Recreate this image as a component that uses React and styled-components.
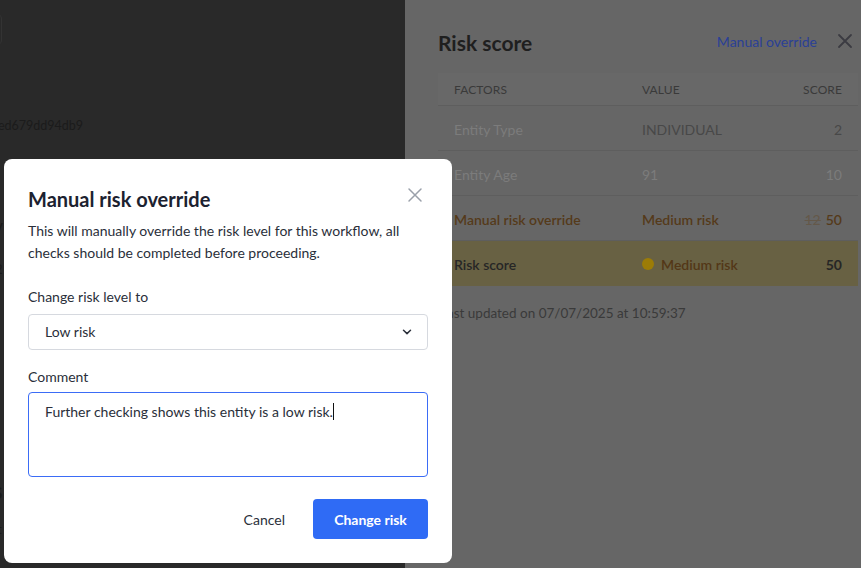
import React from "react";
import styled, { createGlobalStyle } from "styled-components";

const Global = createGlobalStyle`
  html, body { margin: 0; padding: 0; }
  body { overflow: hidden; font-family: "Lato", "Open Sans", sans-serif; }
  * { box-sizing: border-box; }
`;

const Screen = styled.div`
  position: relative;
  width: 861px;
  height: 568px;
  display: flex;
  background: #292929;
  overflow: hidden;
`;

const BackPage = styled.div`
  width: 405px;
  flex: none;
  display: flex;
  flex-direction: column;
  padding-top: 13px;
`;

const BackCard = styled.div`
  width: 40px;
  height: 33px;
  margin-left: -38px;
  border: 1px solid #333;
  border-radius: 6px;
`;

const BackHash = styled.div`
  margin-top: 72px;
  margin-left: -2px;
  font-size: 12.5px;
  color: #1b1b1b;
`;

const BackFrag = styled.div`
  margin-left: ${(p) => p.$x}px;
  margin-top: ${(p) => p.$t}px;
  font-size: ${(p) => p.$s || 13}px;
  font-weight: ${(p) => p.$w || 400};
  color: #1b1b1b;
  line-height: 1;
`;

const Drawer = styled.aside`
  flex: 1;
  background: #666666;
  padding: 30px 3px 0 33px;
  display: flex;
  flex-direction: column;
`;

const DrawerHead = styled.div`
  display: flex;
  align-items: center;
  height: 24px;
  padding-right: 5px;
`;

const DrawerTitle = styled.h2`
  margin: 0;
  flex: 1;
  font-size: 21px;
  font-weight: 700;
  color: #1f1f1f;
`;

const HeadLink = styled.span`
  font-size: 14px;
  color: #2a4096;
  margin-right: 20px;
  margin-top: -2px;
`;

const IconBtn = styled.span`
  display: inline-flex;
  width: 16px;
  height: 16px;
  margin-top: ${(p) => p.$mt}px;
  color: ${(p) => p.$color};
`;

const Table = styled.div`
  margin-top: 19px;
  display: flex;
  flex-direction: column;
`;

const Row = styled.div`
  display: grid;
  grid-template-columns: 188px 1fr auto;
  align-items: center;
  height: ${(p) => (p.$head ? 33 : 45)}px;
  padding: 0 16px;
  border-bottom: 1px solid ${(p) => (p.$last ? "transparent" : "#5e5e5e")};
  background: ${(p) => p.$bg || "transparent"};
  font-size: ${(p) => (p.$head ? 12 : 14)}px;
  padding-top: ${(p) => (p.$head ? 0 : 2)}px;
  ${(p) => p.$head && "text-transform: uppercase; letter-spacing: 0.1px;"}
`;

const Cell = styled.span`
  color: ${(p) => p.$c};
  font-weight: ${(p) => p.$w || 400};
  display: inline-flex;
  align-items: center;
  justify-content: ${(p) => (p.$right ? "flex-end" : "flex-start")};
  gap: 5px;
`;

const Struck = styled.s`
  color: #645849;
  font-weight: 400;
`;

const Dot = styled.span`
  width: 12px;
  height: 12px;
  border-radius: 50%;
  background: #9c7c06;
  margin-right: 2px;
`;

const Updated = styled.div`
  margin-top: 19px;
  font-size: 13.5px;
  color: #3a3a3a;
  padding-left: 2px;
`;

const Modal = styled.div`
  position: absolute;
  left: 4px;
  top: 159px;
  width: 448px;
  height: 404px;
  background: #ffffff;
  border-radius: 8px;
  padding: 28px 24px 24px 24px;
  display: flex;
  flex-direction: column;
`;

const ModalHead = styled.div`
  display: flex;
  align-items: center;
  justify-content: space-between;
  height: 24px;
  padding-right: 5px;
`;

const ModalTitle = styled.h3`
  margin: 0;
  font-size: 20px;
  font-weight: 700;
  color: #1c2230;
`;

const Desc = styled.p`
  margin: 9px 0 0;
  font-size: 14px;
  line-height: 22px;
  color: #2a2f3a;
`;

const Label = styled.div`
  margin-top: ${(p) => p.$mt}px;
  font-size: 14px;
  color: #2a2f3a;
  line-height: 16px;
`;

const SelectBox = styled.div`
  margin-top: 9px;
  height: 36px;
  border: 1px solid #d6d9df;
  border-radius: 4px;
  display: flex;
  align-items: center;
  justify-content: space-between;
  padding: 0 15px 0 16px;
  font-size: 14px;
  color: #2a2f3a;
`;

const TextArea = styled.div`
  margin-top: 7px;
  height: 86px;
  border: 1px solid #3b6cf6;
  border-radius: 4px;
  padding: 9px 16px;
  font-size: 14px;
  color: #2a2f3a;
  line-height: 20px;
`;

const Caret = styled.span`
  display: inline-block;
  width: 1px;
  height: 17px;
  background: #111;
  vertical-align: -3px;
`;

const Actions = styled.div`
  margin-top: 22px;
  display: flex;
  justify-content: flex-end;
  align-items: center;
  gap: 28px;
`;

const TextButton = styled.button`
  border: none;
  background: none;
  font-family: inherit;
  font-size: 14px;
  color: #2a2f3a;
  padding: 0;
`;

const PrimaryButton = styled.button`
  border: none;
  background: #2f6bf5;
  color: #fff;
  font-family: inherit;
  font-size: 14px;
  font-weight: 700;
  height: 40px;
  width: 115px;
  border-radius: 4px;
`;

const XIcon = ({ size = 16, stroke = 1.6 }) => (
  <svg width={size} height={size} viewBox="0 0 16 16" fill="none">
    <path d="M2 2L14 14M14 2L2 14" stroke="currentColor" strokeWidth={stroke} strokeLinecap="round" />
  </svg>
);

const Chevron = () => (
  <svg width="10" height="6" viewBox="0 0 10 6" fill="none">
    <path d="M1.5 1.2L5 4.6L8.5 1.2" stroke="#2a2f3a" strokeWidth="1.5" strokeLinecap="round" strokeLinejoin="round" />
  </svg>
);

export default function App() {
  return (
    <>
      <Global />
      <Screen>
        <BackPage>
          <BackCard />
          <BackHash>ed679dd94db9</BackHash>
          <BackFrag $x={-4} $t={86} $w={700}>y</BackFrag>
          <BackFrag $x={-6} $t={12}>/</BackFrag>
          <BackFrag $x={-5} $t={6}>2</BackFrag>
          <BackFrag $x={-7} $t={208} $s={17} $w={700}>S</BackFrag>
          <BackFrag $x={-3} $t={22}>t</BackFrag>
        </BackPage>
        <Drawer>
          <DrawerHead>
            <DrawerTitle>Risk score</DrawerTitle>
            <HeadLink>Manual override</HeadLink>
            <IconBtn $color="#3b3b42" $mt={-3}>
              <XIcon stroke={1.8} />
            </IconBtn>
          </DrawerHead>
          <Table>
            <Row $head $bg="#686868">
              <Cell $c="#3a3a3a">Factors</Cell>
              <Cell $c="#3a3a3a">Value</Cell>
              <Cell $c="#3a3a3a" $right>Score</Cell>
            </Row>
            <Row>
              <Cell $c="#7c7c7c">Entity Type</Cell>
              <Cell $c="#484848">INDIVIDUAL</Cell>
              <Cell $c="#484848" $right>2</Cell>
            </Row>
            <Row>
              <Cell $c="#7c7c7c">Entity Age</Cell>
              <Cell $c="#7c7c7c">91</Cell>
              <Cell $c="#7c7c7c" $right>10</Cell>
            </Row>
            <Row>
              <Cell $c="#553a1a" $w={600}>Manual risk override</Cell>
              <Cell $c="#553a1a" $w={600}>Medium risk</Cell>
              <Cell $c="#553a1a" $w={600} $right>
                <Struck>12</Struck>50
              </Cell>
            </Row>
            <Row $bg="#686143" $last>
              <Cell $c="#262626" $w={600}>Risk score</Cell>
              <Cell $c="#533717" $w={600}>
                <Dot />
                Medium risk
              </Cell>
              <Cell $c="#262626" $w={700} $right>50</Cell>
            </Row>
          </Table>
          <Updated>Last updated on 07/07/2025 at 10:59:37</Updated>
        </Drawer>

        <Modal role="dialog" aria-label="Manual risk override">
          <ModalHead>
            <ModalTitle>Manual risk override</ModalTitle>
            <IconBtn $color="#9aa0aa" $mt={-8}>
              <XIcon stroke={1.5} />
            </IconBtn>
          </ModalHead>
          <Desc>
            This will manually override the risk level for this workflow, all
            checks should be completed before proceeding.
          </Desc>
          <Label $mt={25}>Change risk level to</Label>
          <SelectBox>
            <span>Low risk</span>
            <Chevron />
          </SelectBox>
          <Label $mt={19}>Comment</Label>
          <TextArea role="textbox">
            Further checking shows this entity is a low risk.<Caret />
          </TextArea>
          <Actions>
            <TextButton>Cancel</TextButton>
            <PrimaryButton>Change risk</PrimaryButton>
          </Actions>
        </Modal>
      </Screen>
    </>
  );
}
